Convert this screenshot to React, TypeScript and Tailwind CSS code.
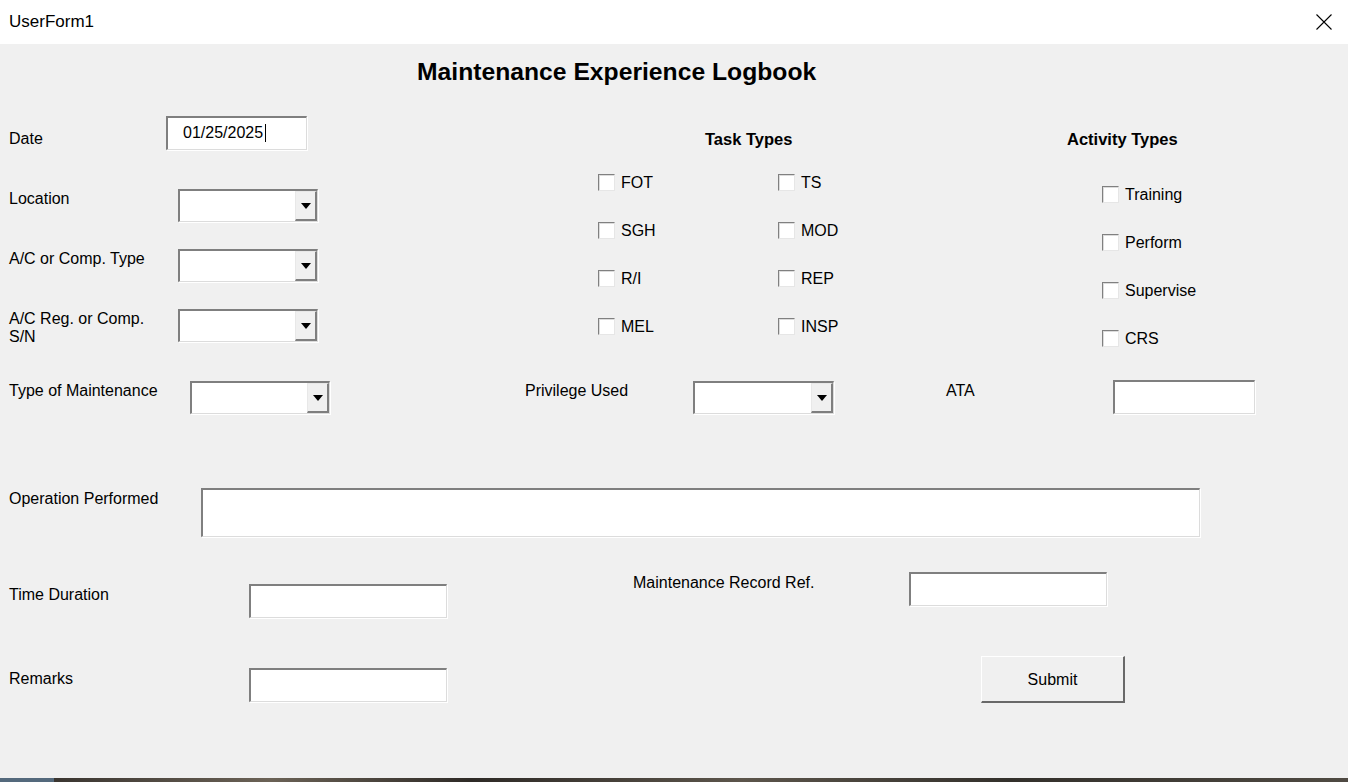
const font = { fontFamily: '"Liberation Sans", Arial, sans-serif' };

const sunken =
  'bg-white border-t-2 border-l-2 border-t-[#7f7f7f] border-l-[#7f7f7f] border-b border-r border-b-[#dcdcdc] border-r-[#dcdcdc] shadow-[1px_1px_0_#ffffff]';

function TextBox({ className = '', children }: { className?: string; children?: React.ReactNode }) {
  return <div className={`${sunken} ${className}`}>{children}</div>;
}

function Combo({ className = '' }: { className?: string }) {
  return (
    <div className={`${sunken} flex justify-end ${className}`}>
      <div className="flex w-[22px] items-center justify-center border-t border-l border-t-[#e8e8e8] border-l-[#e8e8e8] border-b-2 border-r-2 border-b-[#7f7f7f] border-r-[#7f7f7f] bg-[#f0f0f0]">
        <svg width="10" height="6" viewBox="0 0 10 6">
          <path d="M0 0h10L5 6z" fill="#000" />
        </svg>
      </div>
    </div>
  );
}

function Check({ label }: { label: string }) {
  return (
    <div className="flex h-[48px] items-center gap-[6px]">
      <div className="h-[17px] w-[17px] border-t border-l border-t-[#808080] border-l-[#808080] border-b border-r border-b-[#e6e6e6] border-r-[#e6e6e6] bg-white shadow-[inset_1px_1px_0_#dcdcdc]" />
      <span className="pt-[2px] text-[16px] leading-[18px] text-black">{label}</span>
    </div>
  );
}

const tasks = ['FOT', 'TS', 'SGH', 'MOD', 'R/I', 'REP', 'MEL', 'INSP'];
const activities = ['Training', 'Perform', 'Supervise', 'CRS'];

export default function App() {
  return (
    <div className="flex h-[782px] w-[1348px] flex-col overflow-hidden bg-[#f0f0f0] text-black" style={font}>
      {/* title bar */}
      <div className="flex h-[44px] items-center justify-between bg-white pl-[9px] pr-[16px]">
        <span className="text-[17px]">UserForm1</span>
        <svg width="16" height="16" viewBox="0 0 16 16">
          <path d="M0.5 0.5L15.5 15.5M15.5 0.5L0.5 15.5" stroke="#000" strokeWidth="1.1" />
        </svg>
      </div>

      <div className="flex-1">
        <h1 className="mt-[14px] pl-[417px] text-[24.7px] font-bold leading-[28px]">
          Maintenance Experience Logbook
        </h1>

        {/* top section */}
        <div className="mt-[30px] flex h-[264px]">
          <div className="w-[598px] text-[16px] leading-[20px]">
            <div className="flex h-[73px]">
              <span className="w-[166px] pl-[9px] pt-[13px]">Date</span>
              <TextBox className="h-[34px] w-[141px] pl-[15px] pt-[5px]">
                <span className="inline-flex items-center leading-[18px]">
                  01/25/2025<span className="ml-[2px] inline-block h-[18px] w-px bg-black" />
                </span>
              </TextBox>
            </div>
            <div className="flex h-[60px]">
              <span className="w-[178px] pl-[9px]">Location</span>
              <Combo className="h-[33px] w-[140px]" />
            </div>
            <div className="flex h-[60px]">
              <span className="w-[178px] pl-[9px]">A/C or Comp. Type</span>
              <Combo className="h-[33px] w-[140px]" />
            </div>
            <div className="flex">
              <span className="w-[178px] pl-[9px] pt-[1px] leading-[18px]">
                A/C Reg. or Comp.
                <br />
                S/N
              </span>
              <Combo className="h-[33px] w-[140px]" />
            </div>
          </div>

          <div className="w-[469px]">
            <div className="mt-[13px] pl-[107px] text-[16.5px] font-bold leading-[20px]">Task Types</div>
            <div className="mt-[9px] grid w-[360px] grid-cols-2">
              {tasks.map((t) => (
                <Check key={t} label={t} />
              ))}
            </div>
          </div>

          <div>
            <div className="mt-[13px] text-[16.5px] font-bold leading-[20px]">Activity Types</div>
            <div className="mt-[21px] pl-[35px]">
              {activities.map((a) => (
                <Check key={a} label={a} />
              ))}
            </div>
          </div>
        </div>

        {/* type / privilege / ata */}
        <div className="flex h-[34px] text-[16px] leading-[20px]">
          <span className="mt-[1px] w-[190px] pl-[9px]">Type of Maintenance</span>
          <Combo className="mt-[1px] h-[33px] w-[140px]" />
          <span className="mt-[1px] ml-[195px] w-[168px]">Privilege Used</span>
          <Combo className="mt-[1px] h-[33px] w-[141px]" />
          <span className="mt-[1px] ml-[112px] w-[167px]">ATA</span>
          <TextBox className="h-[34px] w-[142px]" />
        </div>

        {/* operation performed */}
        <div className="mt-[74px] flex text-[16px] leading-[20px]">
          <span className="mt-[1px] w-[201px] pl-[9px]">Operation Performed</span>
          <TextBox className="h-[49px] w-[999px]" />
        </div>

        {/* time duration / record ref */}
        <div className="mt-[35px] flex h-[46px] text-[16px] leading-[20px]">
          <span className="mt-[13px] w-[249px] pl-[9px]">Time Duration</span>
          <TextBox className="mt-[12px] h-[34px] w-[198px]" />
          <span className="mt-[1px] ml-[186px] w-[276px]">Maintenance Record Ref.</span>
          <TextBox className="h-[34px] w-[198px]" />
        </div>

        {/* remarks / submit */}
        <div className="mt-[38px] flex text-[16px] leading-[20px]">
          <span className="mt-[13px] w-[249px] pl-[9px]">Remarks</span>
          <TextBox className="mt-[12px] h-[34px] w-[198px]" />
          <button className="ml-[534px] flex h-[47px] w-[144px] items-center justify-center border-t border-l border-t-white border-l-white border-b-2 border-r-2 border-b-[#696969] border-r-[#696969] bg-[#f0f0f0] pt-[2px] text-[16px]">
            Submit
          </button>
        </div>
      </div>

      <div className="h-[4px] bg-[linear-gradient(90deg,#54697c_0%,#54697c_4%,#3a3530_4%,#6b6256_20%,#2e2a26_35%,#5c554b_55%,#33302b_75%,#4f4a42_100%)]" />
    </div>
  );
}
